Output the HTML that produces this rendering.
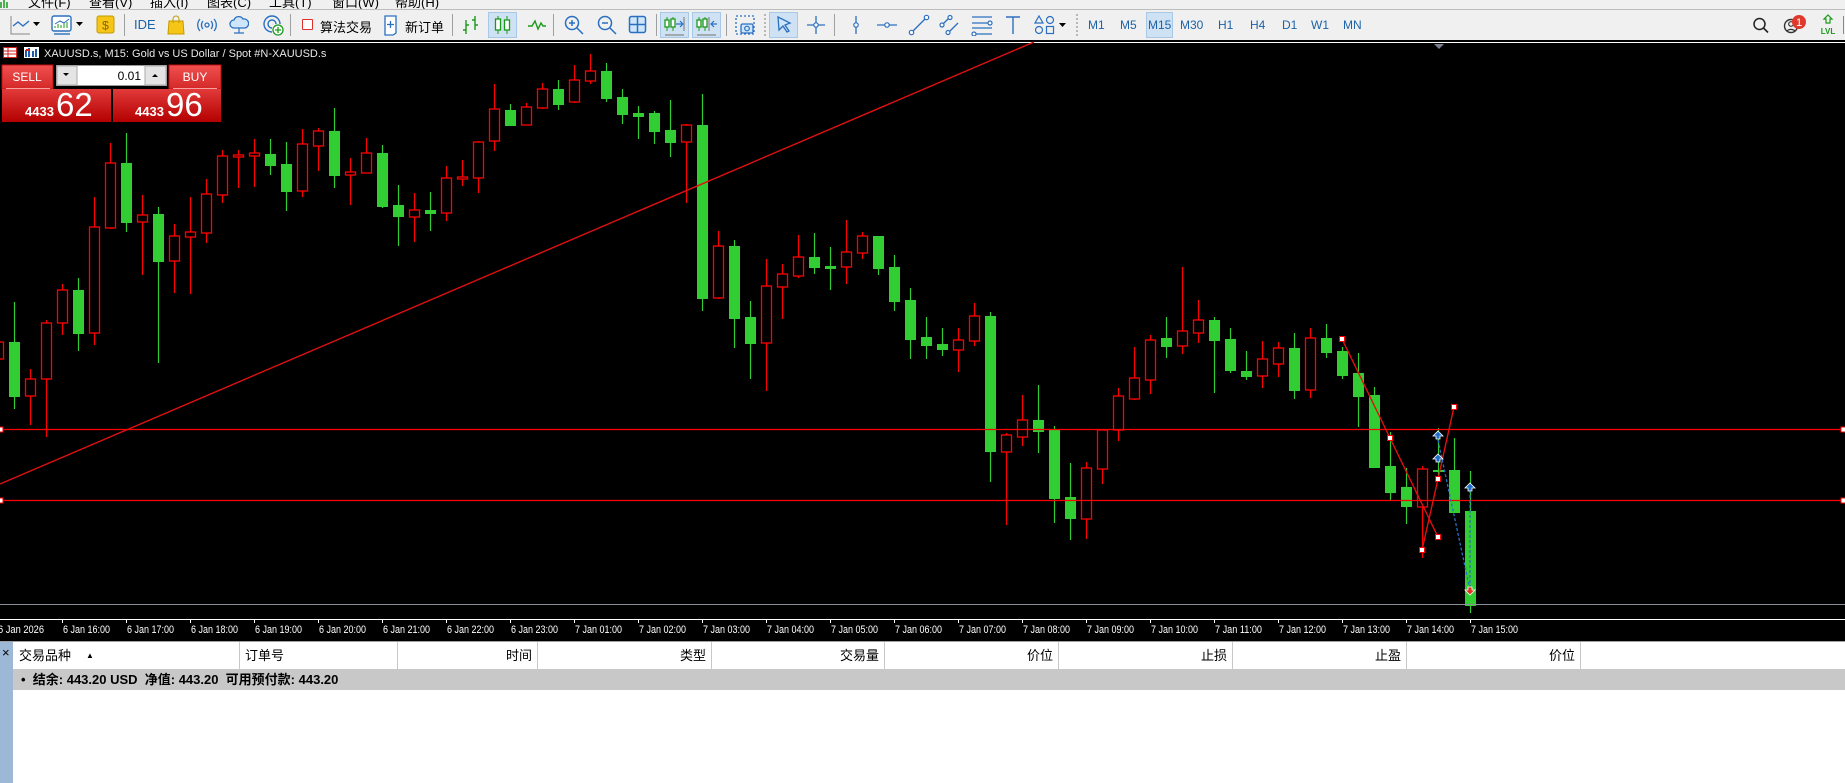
<!DOCTYPE html>
<html><head><meta charset="utf-8">
<style>
*{margin:0;padding:0;box-sizing:border-box}
body{width:1845px;height:783px;overflow:hidden;background:#fff;position:relative;font-family:"Liberation Sans","Noto Sans CJK SC",sans-serif;font-size:12px;color:#000}
.abs{position:absolute}
#menu{left:0;top:0;width:1845px;height:10px;background:#f0f0f0;overflow:hidden;border-bottom:1px solid #bdbdbd}
#menu span{position:absolute;top:-8px;font-size:13px;color:#000}
#tb{left:0;top:10px;width:1845px;height:30px;background:#f0f0f0}
.ic{position:absolute;top:4px}
.sep{position:absolute;top:4px;width:1px;height:22px;background:#a0a0a0}
.dsep{position:absolute;top:4px;width:0;height:22px;border-left:2px dotted #b8b8b8}
.act{position:absolute;top:2px;height:26px;background:#cfe2f3;border:1px solid #a8c8e8}
.tf{position:absolute;top:8px;font-size:12px;color:#1c62a8}
.txt{position:absolute;top:7px;font-size:13px}
#hdr{left:0;top:641px;width:1845px;height:28px;background:#fff;border-top:1px solid #a0a0a0}
.col{position:absolute;top:0;height:27px;border-right:1px solid #c8c8c8;font-size:13px;line-height:27px;padding:0 5px}
</style></head><body>

<div id="menu" class="abs">
<svg style="position:absolute;left:0;top:0" width="8" height="10"><path d="M1 2v6M4 0v8M7 2v6" stroke="#1a9a1a" stroke-width="1.5"/></svg>
<span style="left:28px">文件(F)</span><span style="left:89px">查看(V)</span><span style="left:150px">插入(I)</span><span style="left:207px">图表(C)</span><span style="left:269px">工具(T)</span><span style="left:332px">窗口(W)</span><span style="left:395px">帮助(H)</span>
</div>

<div id="tb" class="abs">
<!-- line chart -->
<svg class="ic" style="left:9px" width="22" height="22"><path d="M2 2v18h19" stroke="#888" fill="none"/><path d="M4 12l5-4 5 4 6-5" stroke="#2a6fc0" stroke-width="1.4" fill="none"/></svg>
<svg class="ic" style="left:33px;top:12px" width="8" height="5"><path d="M0 0h7l-3.5 4z" fill="#000"/></svg>
<svg class="ic" style="left:51px" width="22" height="22"><rect x="1" y="2" width="19" height="15" rx="2" fill="#fff" stroke="#2a6fc0" stroke-width="1.4"/><path d="M4 14v-2M7 14v-4M10 14v-3M13 14v-5M16 14v-6" stroke="#1a9a1a"/><path d="M4 10l5-3 4 2 5-4" stroke="#2a6fc0" fill="none"/><path d="M3 20h16" stroke="#2a6fc0" stroke-width="1.4"/></svg>
<svg class="ic" style="left:76px;top:12px" width="8" height="5"><path d="M0 0h7l-3.5 4z" fill="#000"/></svg>
<svg class="ic" style="left:96px" width="20" height="22"><rect x="1" y="2" width="17" height="17" rx="2" fill="#f5c518" stroke="#c49a00"/><text x="9.5" y="15.5" font-size="12" text-anchor="middle" fill="#8a6500" font-family="Liberation Sans">$</text></svg>
<div class="sep" style="left:124px"></div>
<div class="txt" style="left:134px;color:#1c62a8;font-size:13px">IDE</div>
<svg class="ic" style="left:167px" width="18" height="22"><path d="M2 7h14l1 13H1z" fill="#f5c518" stroke="#c49a00"/><path d="M6 9V5a3 3 0 016 0v4" stroke="#c49a00" fill="none"/></svg>
<svg class="ic" style="left:197px" width="20" height="22"><circle cx="10" cy="11" r="2" fill="none" stroke="#2a6fc0" stroke-width="1.3"/><path d="M6 7a6 6 0 000 8M14 7a6 6 0 010 8M3 5a9 9 0 000 12M17 5a9 9 0 010 12" stroke="#2a6fc0" stroke-width="1.3" fill="none"/></svg>
<svg class="ic" style="left:229px" width="20" height="22"><path d="M5 14a4 4 0 010-8 5 5 0 019-1 4 4 0 012 9z" fill="#cfe6fa" stroke="#2a6fc0" stroke-width="1.3"/><path d="M10 14v5M5 19h10" stroke="#2a6fc0" stroke-width="1.2"/></svg>
<svg class="ic" style="left:262px" width="22" height="22"><path d="M10 18a8 8 0 118-8M10 14a4 4 0 114-4M10 10h.1" stroke="#2a6fc0" stroke-width="1.4" fill="none"/><circle cx="16" cy="16" r="5" fill="#fff" stroke="#1a9a1a" stroke-width="1.3"/><path d="M16 13v6M13 16h6" stroke="#1a9a1a" stroke-width="1.3"/></svg>
<div class="sep" style="left:290px"></div>
<div class="abs" style="left:302px;top:9px;width:11px;height:11px;border:1.5px solid #e03030;border-radius:1px;background:#fff"></div>
<div class="txt" style="left:320px">算法交易</div>
<svg class="ic" style="left:384px" width="14" height="22"><path d="M1 2h11v17l-3 2H1z" fill="#fff" stroke="#2a6fc0" stroke-width="1.3"/><path d="M6.5 7v7M3 10.5h7" stroke="#2a6fc0" stroke-width="1.3"/></svg>
<div class="txt" style="left:405px">新订单</div>
<div class="sep" style="left:452px"></div>
<svg class="ic" style="left:461px" width="20" height="22"><path d="M5 6v14M5 16H2M5 11h3M14 2v14M14 6h-3M14 11h3" stroke="#1a9a1a" stroke-width="1.4"/></svg>
<div class="act" style="left:488px;width:29px"></div>
<svg class="ic" style="left:492px" width="22" height="22"><path d="M6 2v18M15 2v18" stroke="#1a9a1a"/><rect x="3.5" y="5" width="5" height="11" fill="#fff" stroke="#1a9a1a" stroke-width="1.3"/><rect x="12.5" y="6" width="5" height="10" fill="#fff" stroke="#1a9a1a" stroke-width="1.3"/></svg>
<svg class="ic" style="left:527px" width="20" height="22"><path d="M1 12l4 0 3-5 3 8 3-6 2 3h3" stroke="#1a9a1a" stroke-width="1.4" fill="none"/></svg>
<div class="sep" style="left:553px"></div>
<svg class="ic" style="left:563px" width="22" height="22"><circle cx="9" cy="9" r="6.5" fill="none" stroke="#2a6fc0" stroke-width="1.5"/><path d="M14 14l6 6M6 9h6M9 6v6" stroke="#2a6fc0" stroke-width="1.5"/></svg>
<svg class="ic" style="left:596px" width="22" height="22"><circle cx="9" cy="9" r="6.5" fill="none" stroke="#2a6fc0" stroke-width="1.5"/><path d="M14 14l6 6M6 9h6" stroke="#2a6fc0" stroke-width="1.5"/></svg>
<svg class="ic" style="left:628px" width="20" height="22"><rect x="1.5" y="2.5" width="16" height="16" rx="2" fill="#cfe6fa" stroke="#2a6fc0" stroke-width="1.5"/><path d="M9.5 2.5v16M1.5 10.5h16" stroke="#2a6fc0" stroke-width="1.5"/></svg>
<div class="sep" style="left:656px"></div>
<div class="act" style="left:660px;width:29px"></div>
<svg class="ic" style="left:663px" width="24" height="22"><path d="M4 3v14M10 3v14" stroke="#1a9a1a"/><rect x="2" y="6" width="4" height="7" fill="#fff" stroke="#1a9a1a" stroke-width="1.3"/><rect x="8" y="5" width="4" height="8" fill="#fff" stroke="#1a9a1a" stroke-width="1.3"/><path d="M13 10h6M17 7l3 3-3 3" stroke="#2a6fc0" stroke-width="1.2" fill="none"/><path d="M21 3v14M2 21h19" stroke="#888" stroke-width="1.2"/></svg>
<div class="act" style="left:692px;width:29px"></div>
<svg class="ic" style="left:695px" width="24" height="22"><path d="M4 3v14M10 3v14" stroke="#1a9a1a"/><rect x="2" y="6" width="4" height="7" fill="#fff" stroke="#1a9a1a" stroke-width="1.3"/><rect x="8" y="5" width="4" height="8" fill="#fff" stroke="#1a9a1a" stroke-width="1.3"/><path d="M14 3v14" stroke="#888" stroke-width="1.2"/><path d="M22 10h-6M19 7l-3 3 3 3" stroke="#2a6fc0" stroke-width="1.2" fill="none"/><path d="M2 21h19" stroke="#888" stroke-width="1.2"/></svg>
<div class="sep" style="left:726px"></div>
<svg class="ic" style="left:735px" width="22" height="22"><rect x="1" y="2" width="18" height="18" fill="none" stroke="#2a6fc0" stroke-width="1.3" stroke-dasharray="2 2"/><rect x="6" y="10" width="12" height="9" rx="1.5" fill="#cfe6fa" stroke="#2a6fc0" stroke-width="1.3"/><circle cx="12" cy="14.5" r="2.3" fill="none" stroke="#2a6fc0" stroke-width="1.2"/></svg>
<div class="dsep" style="left:764px"></div>
<div class="act" style="left:769px;width:29px"></div>
<svg class="ic" style="left:774px" width="20" height="22"><path d="M4 3l12 6-5 2 4 6-2 1-4-6-4 4z" fill="#cfe6fa" stroke="#2a6fc0" stroke-width="1.3"/></svg>
<svg class="ic" style="left:806px" width="20" height="22"><path d="M10 2v18M1 11h18" stroke="#2a6fc0" stroke-width="1.3"/><circle cx="10" cy="11" r="2.2" fill="#fff" stroke="#2a6fc0" stroke-width="1.2"/></svg>
<div class="sep" style="left:834px"></div>
<svg class="ic" style="left:849px" width="14" height="22"><path d="M7 2v18" stroke="#2a6fc0" stroke-width="1.3"/><circle cx="7" cy="11" r="2.2" fill="#fff" stroke="#2a6fc0" stroke-width="1.2"/></svg>
<svg class="ic" style="left:876px" width="22" height="22"><path d="M1 11h20" stroke="#2a6fc0" stroke-width="1.3"/><circle cx="11" cy="11" r="2.2" fill="#fff" stroke="#2a6fc0" stroke-width="1.2"/></svg>
<svg class="ic" style="left:908px" width="22" height="22"><path d="M3 19L19 3" stroke="#2a6fc0" stroke-width="1.3"/><circle cx="3.5" cy="18.5" r="2.2" fill="#fff" stroke="#2a6fc0" stroke-width="1.2"/><circle cx="18.5" cy="3.5" r="2.2" fill="#fff" stroke="#2a6fc0" stroke-width="1.2"/></svg>
<svg class="ic" style="left:939px" width="22" height="22"><path d="M2 12L11 3M9 19l10-10" stroke="#2a6fc0" stroke-width="1.3"/><circle cx="3" cy="11" r="2" fill="#fff" stroke="#2a6fc0" stroke-width="1.2"/><circle cx="11" cy="3.5" r="2" fill="#fff" stroke="#2a6fc0" stroke-width="1.2"/><circle cx="9" cy="18.5" r="2" fill="#fff" stroke="#2a6fc0" stroke-width="1.2"/></svg>
<svg class="ic" style="left:971px" width="22" height="22"><path d="M1 3h20M1 9h16M1 14h20M4 20h17" stroke="#2a6fc0" stroke-width="1.3"/><circle cx="19" cy="9" r="2" fill="#fff" stroke="#2a6fc0" stroke-width="1.2"/><circle cx="3" cy="20" r="2" fill="#fff" stroke="#2a6fc0" stroke-width="1.2"/></svg>
<svg class="ic" style="left:1004px" width="18" height="22"><path d="M2 3h14M9 3v17" stroke="#2a6fc0" stroke-width="1.4"/></svg>
<svg class="ic" style="left:1034px" width="22" height="22"><path d="M5 2l4 7H1z" fill="none" stroke="#2a6fc0" stroke-width="1.2"/><circle cx="16" cy="6" r="3.5" fill="none" stroke="#2a6fc0" stroke-width="1.2"/><circle cx="5" cy="16" r="3.5" fill="none" stroke="#2a6fc0" stroke-width="1.2"/><rect x="12.5" y="12.5" width="7" height="7" fill="none" stroke="#2a6fc0" stroke-width="1.2"/></svg>
<svg class="ic" style="left:1059px;top:13px" width="8" height="5"><path d="M0 0h7l-3.5 4z" fill="#000"/></svg>
<div class="dsep" style="left:1076px"></div>
<div class="tf" style="left:1088px">M1</div>
<div class="tf" style="left:1120px">M5</div>
<div class="act" style="left:1146px;width:27px"></div>
<div class="tf" style="left:1148px">M15</div>
<div class="tf" style="left:1180px">M30</div>
<div class="tf" style="left:1218px">H1</div>
<div class="tf" style="left:1250px">H4</div>
<div class="tf" style="left:1282px">D1</div>
<div class="tf" style="left:1311px">W1</div>
<div class="tf" style="left:1343px">MN</div>
<svg class="ic" style="left:1752px" width="18" height="22"><circle cx="7.5" cy="10" r="5.5" fill="none" stroke="#222" stroke-width="1.5"/><path d="M11.5 14l4.5 4.5" stroke="#222" stroke-width="1.6"/></svg>
<svg class="ic" style="left:1783px" width="26" height="22"><circle cx="8" cy="12" r="6.5" fill="none" stroke="#333" stroke-width="1.4"/><circle cx="8" cy="10" r="2.3" fill="none" stroke="#333" stroke-width="1.2"/><path d="M4 17a5 4 0 018 0" fill="none" stroke="#333" stroke-width="1.2"/><circle cx="16" cy="8" r="7" fill="#e0392b"/><text x="16" y="12" font-size="11" fill="#fff" text-anchor="middle" font-family="Liberation Sans">1</text></svg>
<svg class="ic" style="left:1819px" width="20" height="24"><path d="M9 1l4 4h-2v4H7V5H5z" fill="none" stroke="#1a9a1a" stroke-width="1.2"/><text x="9" y="20" font-size="8" fill="#1a9a1a" text-anchor="middle" font-family="Liberation Sans" font-weight="bold">LVL</text></svg>
<div class="abs" style="left:1843px;top:6px;width:1px;height:18px;background:#888"></div>
</div>

<svg class="abs" style="left:0;top:40px" width="1845" height="601" viewBox="0 40 1845 601" id="ch">
<rect x="0" y="40" width="1845" height="601" fill="#000"/>
<path d="M0 42.5h1845" stroke="#fff" stroke-width="1"/>
<path d="M1434 44h10l-5 5z" fill="#7a8090"/>
<g id="cd"></g>
<path d="M0 484L1034 42" stroke="#e01010" stroke-width="1.4"/>
<path d="M0 429.5h1845M0 500.5h1845" stroke="#ff0000" stroke-width="1.2"/>
<rect x="-2" y="427" width="5" height="5" fill="#fff" stroke="#f00"/><rect x="-2" y="498" width="5" height="5" fill="#fff" stroke="#f00"/>
<rect x="1841" y="427" width="5" height="5" fill="#fff" stroke="#f00"/><rect x="1841" y="498" width="5" height="5" fill="#fff" stroke="#f00"/>
<path d="M1342 339L1390 438L1438 537M1422 550L1438 479L1454 407" stroke="#e01010" stroke-width="1.4" fill="none"/>
<path d="M1438 440L1470 590M1470 490V590" stroke="#2a6fc0" stroke-width="1.3" stroke-dasharray="3 2" fill="none"/>
<g fill="#fff" stroke="#f00">
<rect x="1339.5" y="336.5" width="5" height="5"/><rect x="1387.5" y="435.5" width="5" height="5"/><rect x="1435.5" y="534.5" width="5" height="5"/><rect x="1419.5" y="547.5" width="5" height="5"/><rect x="1435.5" y="476.5" width="5" height="5"/><rect x="1451.5" y="404.5" width="5" height="5"/>
</g>
<g fill="#1e6ec8" stroke="#fff" stroke-width="0.8">
<path d="M1438 431l5 5h-3v3h-4v-3h-3z"/><path d="M1438 454l5 5h-3v3h-4v-3h-3z"/><path d="M1470 483l5 5h-3v3h-4v-3h-3z"/>
</g>
<path d="M1470 595l5-5h-3v-3h-4v3h-3z" fill="#e03020" stroke="#fff" stroke-width="0.8"/>
<path d="M0 604.5h1845" stroke="#8a8f98"/>
<path d="M0 619.5h1845" stroke="#fff"/>
<g stroke="#fff" id="ticks"></g>
<g fill="#fff" font-family="Liberation Sans" font-size="11" id="tl">
<text x="-2" y="633" textLength="46" lengthAdjust="spacingAndGlyphs">6 Jan 2026</text>
</g>
<!-- title -->
<rect x="3" y="47" width="14" height="11" fill="#fff"/><path d="M3.5 47.5h13v10h-13zM3.5 51h13M3.5 54h13M8 47.5v10" stroke="#d02020" fill="none"/>
<rect x="24" y="47" width="15" height="11" fill="#fff"/><path d="M26 50v7M29 48v9M33 51v6M36 49v8" stroke="#1e5ab0" stroke-width="2"/><path d="M26 50h3" stroke="#d02020" stroke-width="2"/>
<text x="44" y="57" fill="#e8e8e8" font-family="Liberation Sans" font-size="11">XAUUSD.s, M15:  Gold vs US Dollar / Spot #N-XAUUSD.s</text>
<!-- trade panel -->
<defs>
<linearGradient id="rg" x1="0" y1="0" x2="0" y2="1"><stop offset="0" stop-color="#e23a3a"/><stop offset="1" stop-color="#b40000"/></linearGradient>
<linearGradient id="rb" x1="0" y1="0" x2="0" y2="1"><stop offset="0" stop-color="#f05050"/><stop offset="1" stop-color="#d42828"/></linearGradient>
</defs>
<rect x="2" y="65" width="51" height="24" fill="url(#rb)" stroke="#c01010"/>
<path d="M6 88.5h44" stroke="#f8a0a0"/>
<text x="27" y="81" fill="#fff" font-family="Liberation Sans" font-size="12" text-anchor="middle">SELL</text>
<rect x="169" y="65" width="52" height="24" fill="url(#rb)" stroke="#c01010"/>
<path d="M173 88.5h44" stroke="#f8a0a0"/>
<text x="195" y="81" fill="#fff" font-family="Liberation Sans" font-size="12" text-anchor="middle">BUY</text>
<rect x="56.5" y="65.5" width="110" height="20" fill="#fff" stroke="#999"/>
<rect x="57" y="66" width="20" height="19" fill="#e4e4e4" stroke="#aaa"/><path d="M63 73h6l-3 3z" fill="#000"/>
<rect x="145" y="66" width="21" height="19" fill="#e4e4e4" stroke="#aaa"/><path d="M152 77h6l-3-3z" fill="#000"/>
<text x="141" y="80" fill="#000" font-family="Liberation Sans" font-size="12" text-anchor="end">0.01</text>
<rect x="2" y="89" width="109" height="33" fill="url(#rg)"/>
<rect x="113" y="89" width="108" height="33" fill="url(#rg)"/>
<text x="25" y="116" fill="#fff" font-family="Liberation Sans" font-size="13" font-weight="bold">4433</text>
<text x="56" y="116" fill="#fff" font-family="Liberation Sans" font-size="33">62</text>
<text x="135" y="116" fill="#fff" font-family="Liberation Sans" font-size="13" font-weight="bold">4433</text>
<text x="166" y="116" fill="#fff" font-family="Liberation Sans" font-size="33">96</text>
</svg>

<div id="hdr" class="abs">
<div class="col" style="left:13px;width:227px;padding-left:6px">交易品种<span style="position:absolute;left:73px;font-size:8px">▲</span></div>
<div class="col" style="left:240px;width:158px">订单号</div>
<div class="col" style="left:398px;width:140px;text-align:right">时间</div>
<div class="col" style="left:538px;width:174px;text-align:right">类型</div>
<div class="col" style="left:712px;width:173px;text-align:right">交易量</div>
<div class="col" style="left:885px;width:174px;text-align:right">价位</div>
<div class="col" style="left:1059px;width:174px;text-align:right">止损</div>
<div class="col" style="left:1233px;width:174px;text-align:right">止盈</div>
<div class="col" style="left:1407px;width:174px;text-align:right">价位</div>
</div>
<div class="abs" style="left:0;top:642px;width:13px;height:141px;background:#9db8d6"></div>
<div class="abs" style="left:2px;top:645px;font-size:13px;line-height:16px">×</div>
<div class="abs" style="left:13px;top:669px;width:1832px;height:21px;background:#c8c8c8;font-size:13px;font-weight:bold;line-height:21px;padding-left:8px">•&nbsp;&nbsp;结余: 443.20 USD&nbsp;&nbsp;净值: 443.20&nbsp;&nbsp;可用预付款: 443.20</div>

<script>
var D=[[-2,'r',335,342,359,365],[14,'g',302,342,397,409],[30,'r',369,379,396,425],[46,'r',320,323,379,437],[62,'r',284,290,323,335],[78,'g',278,290,334,351],[94,'r',197,227,333,345],[110,'r',143,163,228,229],[126,'g',133,163,223,232],[142,'r',195,215,222,275],[158,'g',207,214,262,363],[174,'r',224,236,261,293],[190,'r',197,232,237,294],[206,'r',179,194,233,243],[222,'r',150,156,195,203],[238,'r',150,155,157,188],[254,'r',139,153,156,187],[270,'g',139,154,166,175],[286,'g',142,164,192,211],[302,'r',129,144,191,197],[318,'r',128,131,146,171],[334,'g',108,131,176,188],[350,'r',158,172,175,205],[366,'r',138,153,173,173],[382,'g',145,153,207,208],[398,'g',185,205,217,246],[414,'r',193,210,217,242],[430,'g',192,210,214,231],[446,'r',166,178,213,221],[462,'r',160,177,179,186],[478,'r',141,142,178,193],[494,'r',84,109,141,151],[510,'g',104,110,126,126],[526,'r',103,107,125,125],[542,'r',83,89,108,109],[558,'g',80,89,105,110],[574,'r',65,80,102,103],[590,'r',54,71,81,84],[606,'g',63,71,99,102],[622,'g',89,97,115,124],[638,'g',106,113,117,139],[654,'g',111,113,132,144],[670,'g',100,130,143,157],[686,'r',124,125,142,203],[702,'g',94,125,299,311],[718,'r',231,246,298,299],[734,'g',240,246,319,348],[750,'g',301,317,344,379],[766,'r',259,286,343,391],[782,'r',264,274,287,319],[798,'r',235,257,276,278],[814,'g',233,257,268,274],[830,'g',247,266,269,290],[846,'r',220,252,267,284],[862,'r',232,236,253,259],[878,'g',236,236,269,275],[894,'g',255,267,302,311],[910,'g',288,300,340,359],[926,'g',317,337,346,359],[942,'g',328,344,350,356],[958,'r',328,340,350,372],[974,'r',303,316,341,346],[990,'g',312,316,452,482],[1006,'r',433,435,452,525],[1022,'r',395,420,437,446],[1038,'g',385,420,432,453],[1054,'g',426,430,499,523],[1070,'g',463,497,519,540],[1086,'r',462,468,519,539],[1102,'r',430,430,469,484],[1118,'r',388,396,430,441],[1134,'r',347,378,399,400],[1150,'r',335,340,380,394],[1166,'g',317,338,347,358],[1182,'r',267,331,346,354],[1198,'r',300,320,333,343],[1214,'g',317,320,341,393],[1230,'g',328,339,371,373],[1246,'g',351,371,377,380],[1262,'r',341,359,376,388],[1278,'r',342,348,364,377],[1294,'g',333,348,391,399],[1310,'r',328,338,390,398],[1326,'g',324,338,353,358],[1342,'g',347,351,376,379],[1358,'g',353,373,397,427],[1374,'g',387,395,468,468],[1390,'g',432,466,493,500],[1406,'g',468,487,507,524],[1422,'r',466,469,507,558],[1438,'g',428,470,472,476],[1454,'g',438,470,513,513],[1470,'g',471,511,606,613]];
var ns='http://www.w3.org/2000/svg',g=document.getElementById('cd'),s='';
D.forEach(function(c){var x=c[0],col=c[1]=='g'?'#32cd32':'#ff0000';
s+='<path d="M'+(x+.5)+' '+c[2]+'V'+c[5]+'" stroke="'+col+'" stroke-width="1.2"/>';
var h=Math.max(c[4]-c[3],2);
if(c[1]=='g')s+='<rect x="'+(x-5)+'" y="'+c[3]+'" width="11" height="'+h+'" fill="#32cd32"/>';
else s+='<rect x="'+(x-4.5)+'" y="'+c[3]+'" width="10" height="'+h+'" fill="#000" stroke="#ff0000" stroke-width="1.3"/>';});
g.innerHTML=s;
var L=['6 Jan 16:00','6 Jan 17:00','6 Jan 18:00','6 Jan 19:00','6 Jan 20:00','6 Jan 21:00','6 Jan 22:00','6 Jan 23:00','7 Jan 01:00','7 Jan 02:00','7 Jan 03:00','7 Jan 04:00','7 Jan 05:00','7 Jan 06:00','7 Jan 07:00','7 Jan 08:00','7 Jan 09:00','7 Jan 10:00','7 Jan 11:00','7 Jan 12:00','7 Jan 13:00','7 Jan 14:00','7 Jan 15:00'];
var t='',k='';L.forEach(function(l,i){var x=62+64*i;k+='<path d="M'+(x+.5)+' 619V623"/>';t+='<text x="'+(x+1)+'" y="633" textLength="47" lengthAdjust="spacingAndGlyphs">'+l+'</text>';});
document.getElementById('ticks').innerHTML=k;document.getElementById('tl').innerHTML+=t;
</script>
</body></html>
